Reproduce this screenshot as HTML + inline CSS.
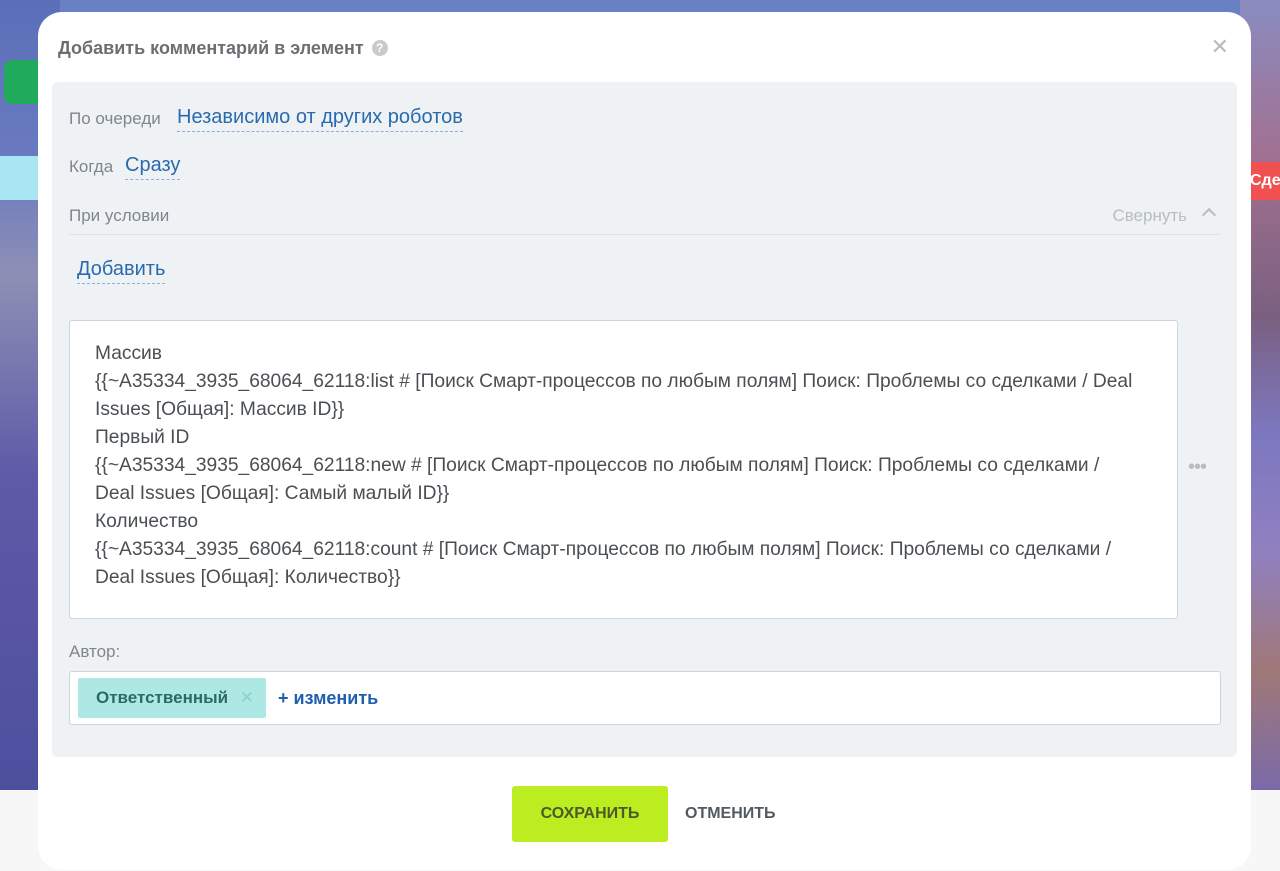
<!DOCTYPE html>
<html><head><meta charset="utf-8"><style>
body{margin:0;width:1280px;height:871px;overflow:hidden;position:relative;font-family:"Liberation Sans",sans-serif;background:#f3f3f5}
.bgl{position:absolute;left:0;top:0;width:60px;height:790px;background:linear-gradient(180deg,#5a6fb8 0%,#6a7ac0 20%,#8d8fb5 35%,#5f5aa8 60%,#4d4f9e 100%)}
.bgtop{position:absolute;left:0;top:0;width:1280px;height:20px;background:#6a80c4}
.bgr{position:absolute;left:1240px;top:0;width:40px;height:790px;background:linear-gradient(180deg,#8a8cc0 0%,#a27090 20%,#7a6080 40%,#7c78c0 55%,#9080c0 70%,#a07878 85%,#7a6aa8 100%)}
.bottom{position:absolute;left:0;top:790px;width:1280px;height:81px;background:#f7f7f8}
.modal{position:absolute;left:38px;top:12px;width:1213px;height:858px;background:#fff;border-radius:24px}
.title{position:absolute;left:20px;top:26px;font-size:18px;font-weight:bold;color:#6b6f73}
.q{display:inline-block;width:16px;height:16px;border-radius:50%;background:#c8cbce;color:#fff;font-size:12px;text-align:center;line-height:16px;margin-left:8px;vertical-align:2px}
.close{position:absolute;right:22px;top:22px;font-size:22px;color:#b8bbbe}
.panel{position:absolute;left:14px;top:70px;width:1185px;height:675px;background:#eef2f4;border-radius:6px}
.lbl{position:absolute;font-size:17px;color:#80868b}
.lnk{position:absolute;font-size:20px;color:#2a6aae;border-bottom:1px dashed #8fb0d4;padding-bottom:2px}
.ta{position:absolute;left:17px;top:238px;width:1109px;height:299px;background:#fff;border:1px solid #cfd4d8;border-radius:3px;font-size:19.2px;line-height:28px;color:#4a4f54;padding:19px 25px;box-sizing:border-box;white-space:nowrap}
.auth{position:absolute;left:17px;top:589px;width:1150px;height:52px;background:#fff;border:1px solid #cfd4d8;border-radius:3px}
.tag{position:absolute;left:8px;top:6px;width:188px;height:40px;background:#aee8e4;border-radius:2px;font-size:17px;font-weight:bold;color:#2b6a66;line-height:40px;padding-left:18px;box-sizing:border-box}
.btn{position:absolute;left:474px;top:774px;width:156px;height:56px;background:#bbed21;border-radius:3px;font-size:16px;font-weight:bold;color:#4c5a2a;text-align:center;line-height:56px}
</style></head><body>
<div class="bgtop"></div><div class="bgl"></div><div class="bgr"></div><div class="bottom"></div>
<div style="position:absolute;left:4px;top:60px;width:40px;height:44px;background:#1faa5c;border-radius:8px"></div>
<div style="position:absolute;left:0;top:156px;width:38px;height:44px;background:#a8e6f2"></div>
<div style="position:absolute;left:1250px;top:162px;width:30px;height:38px;background:#f05050;color:#fff;font-weight:bold;font-size:16px;line-height:38px">Сде</div>
<div class="modal">
<div class="title">Добавить комментарий в элемент<span class="q">?</span></div>
<div class="close">✕</div>
<div class="panel">
<div class="lbl" style="left:17px;top:27px">По очереди</div>
<div class="lnk" style="left:125px;top:24px">Независимо от других роботов</div>
<div class="lbl" style="left:17px;top:75px">Когда</div>
<div class="lnk" style="left:73px;top:72px">Сразу</div>
<div class="lbl" style="left:17px;top:124px">При условии</div>
<div class="lbl" style="right:50px;top:124px;color:#b8bdc1">Свернуть</div>
<div style="position:absolute;right:23px;top:128px;width:8px;height:8px;border-left:2px solid #b8bdc1;border-top:2px solid #b8bdc1;transform:rotate(45deg)"></div>
<div style="position:absolute;left:17px;top:152px;width:1151px;height:1px;background:#dde2e5"></div>
<div class="lnk" style="left:25px;top:176px">Добавить</div>
<div class="ta">Массив<br>{{~A35334_3935_68064_62118:list # [Поиск Смарт-процессов по любым полям] Поиск: Проблемы со сделками / Deal<br>Issues [Общая]: Массив ID}}<br>Первый ID<br>{{~A35334_3935_68064_62118:new # [Поиск Смарт-процессов по любым полям] Поиск: Проблемы со сделками /<br>Deal Issues [Общая]: Самый малый ID}}<br>Количество<br>{{~A35334_3935_68064_62118:count # [Поиск Смарт-процессов по любым полям] Поиск: Проблемы со сделками /<br>Deal Issues [Общая]: Количество}}</div>
<div style="position:absolute;left:1136px;top:374px;font-size:20px;color:#b8bdc1;letter-spacing:-1px">•••</div>
<div class="lbl" style="left:17px;top:560px">Автор:</div>
<div class="auth"><div class="tag">Ответственный<span style="position:absolute;right:12px;color:#8fcfcb;font-weight:normal">✕</span></div>
<div style="position:absolute;left:208px;top:16px;font-size:18px;font-weight:bold;color:#1f5fb0">+ изменить</div></div>
</div>
<div class="btn">СОХРАНИТЬ</div>
<div style="position:absolute;left:647px;top:793px;font-size:16px;font-weight:bold;color:#525a60">ОТМЕНИТЬ</div>
</div>
</body></html>
